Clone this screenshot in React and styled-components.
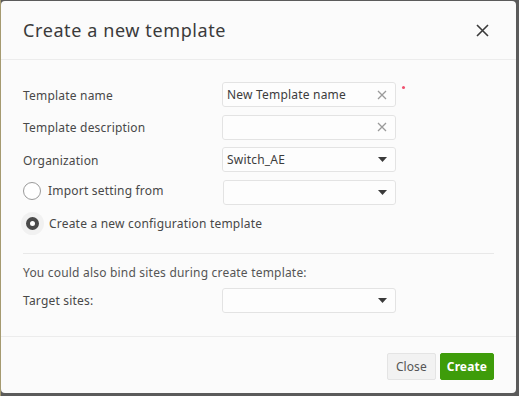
import React from 'react'
import styled, { createGlobalStyle } from 'styled-components'

const GlobalStyle = createGlobalStyle`
	html, body {
		margin: 0;
		padding: 0;
		background: #5b5b5b;
		font-family: "Noto Sans", Lato, sans-serif;
	}
`

const Backdrop = styled.div`
	width: 519px;
	height: 396px;
	padding: 1px 3px 3px 1px;
	box-sizing: border-box;
	background: linear-gradient(90deg, #a59a70 0, #a59a70 1px, #5b5b5b 1px);
`

const Modal = styled.div`
	display: flex;
	flex-direction: column;
	height: 100%;
	background: #fbfbfb;
	border-radius: 4px;
	overflow: hidden;
`

const Header = styled.div`
	display: flex;
	align-items: center;
	justify-content: space-between;
	height: 58px;
	flex: none;
	padding: 0 27px 0 22px;
	border-bottom: 1px solid #ececec;

	& h2 {
		margin: 0;
		font-size: 18px;
		font-weight: 400;
		color: #3a3a3a;
		letter-spacing: 0.6px;
	}
`

const CloseX = styled.button`
	border: 0;
	background: none;
	padding: 0;
	width: 13px;
	height: 13px;
	cursor: pointer;
	display: flex;
`

const Body = styled.div`
	flex: 1;
	padding: 22px 22px 0 22px;
	border-bottom: 1px solid #ececec;
`

const Row = styled.div`
	display: grid;
	grid-template-columns: 199px 174px auto;
	align-items: center;
	height: 25px;
	margin-bottom: ${props => props.gap || 7.5}px;
`

const Label = styled.label`
	grid-column: ${props => props.wide ? '1 / -1' : 'auto'};
	font-size: 12px;
	letter-spacing: 0.2px;
	color: #484848;
	display: flex;
	align-items: center;
	gap: 7px;
	white-space: nowrap;
	margin-top: 1px;
`

const Field = styled.div`
	display: flex;
	align-items: center;
	justify-content: space-between;
	height: 25px;
	box-sizing: border-box;
	padding: 0 8px 0 4px;
	background: #fdfdfd;
	border: 1px solid #e3e3e3;
	border-radius: 3px;
	font-size: 12px;
	letter-spacing: 0.2px;
	color: #3c3c3c;
	margin-left: ${props => props.shift || 0}px;
`

const Required = styled.span`
	align-self: start;
	margin: 4px 0 0 6px;
	width: 3px;
	height: 3px;
	border-radius: 50%;
	background: #f0506e;
`

const Radio = styled.span`
	width: ${props => props.checked ? 13 : 18}px;
	height: ${props => props.checked ? 13 : 18}px;
	margin: ${props => props.checked ? '0 3px 0 3px' : '-3px 0 0 0'};
	box-sizing: border-box;
	border-radius: 50%;
	border: ${props => props.checked ? '4px solid #4a4a4a' : '1px solid #9a9a9a'};
	background: #fff;
	box-shadow: ${props => props.checked ? '0 0 0 5px #f1f1f1' : 'none'};
	flex: none;
`

const RadioText = styled.span`
	margin-top: ${props => props.raised ? -5 : 0}px;
`

const Divider = styled.hr`
	border: 0;
	border-top: 1px solid #e8e8e8;
	margin: 17px 0 10px 0;
`

const Note = styled.div`
	font-size: 12px;
	letter-spacing: 0.2px;
	color: #555;
	margin-bottom: 7px;
`

const Footer = styled.div`
	display: flex;
	justify-content: flex-end;
	gap: 4px;
	box-sizing: border-box;
	flex: none;
	padding: 16px 22px 0 0;
	height: 56px;
`

const Button = styled.button`
	height: 27px;
	padding: 0 ${props => props.primary ? 6 : 8}px;
	border-radius: 2px;
	border: 1px solid ${props => props.primary ? '#3e9c0a' : '#e4e4e4'};
	background: ${props => props.primary ? '#3e9c0a' : '#f2f2f2'};
	color: ${props => props.primary ? '#fff' : '#555'};
	font-family: inherit;
	font-size: 12px;
	letter-spacing: 0.1px;
	font-weight: ${props => props.primary ? 700 : 400};
`

const Clear = () => (
	<svg width='10' height='10' viewBox='0 0 10 10'>
		<path d='M1 1L9 9M9 1L1 9' stroke='#9a9a9a' strokeWidth='1.3' />
	</svg>
)

const Caret = () => (
	<svg width='9' height='5' viewBox='0 0 9 5'>
		<path d='M0 0H9L4.5 5Z' fill='#3a3a3a' />
	</svg>
)

const App = () => (
	<>
		<GlobalStyle />
		<Backdrop>
			<Modal>
				<Header>
					<h2>Create a new template</h2>
					<CloseX>
						<svg width='13' height='13' viewBox='0 0 13 13'>
							<path d='M1 1L12 12M12 1L1 12' stroke='#3a3a3a' strokeWidth='1.6' />
						</svg>
					</CloseX>
				</Header>
				<Body>
					<Row>
						<Label>Template name</Label>
						<Field>New Template name<Clear /></Field>
						<Required />
					</Row>
					<Row>
						<Label>Template description</Label>
						<Field><span /><Clear /></Field>
					</Row>
					<Row>
						<Label>Organization</Label>
						<Field>Switch_AE<Caret /></Field>
					</Row>
					<Row gap={6}>
						<Label><Radio /><RadioText raised>Import setting from</RadioText></Label>
						<Field shift={1}><span /><Caret /></Field>
					</Row>
					<Row>
						<Label wide><Radio checked /><RadioText>Create a new configuration template</RadioText></Label>
					</Row>
					<Divider />
					<Note>You could also bind sites during create template:</Note>
					<Row>
						<Label>Target sites:</Label>
						<Field><span /><Caret /></Field>
					</Row>
				</Body>
				<Footer>
					<Button>Close</Button>
					<Button primary>Create</Button>
				</Footer>
			</Modal>
		</Backdrop>
	</>
)

export default App
